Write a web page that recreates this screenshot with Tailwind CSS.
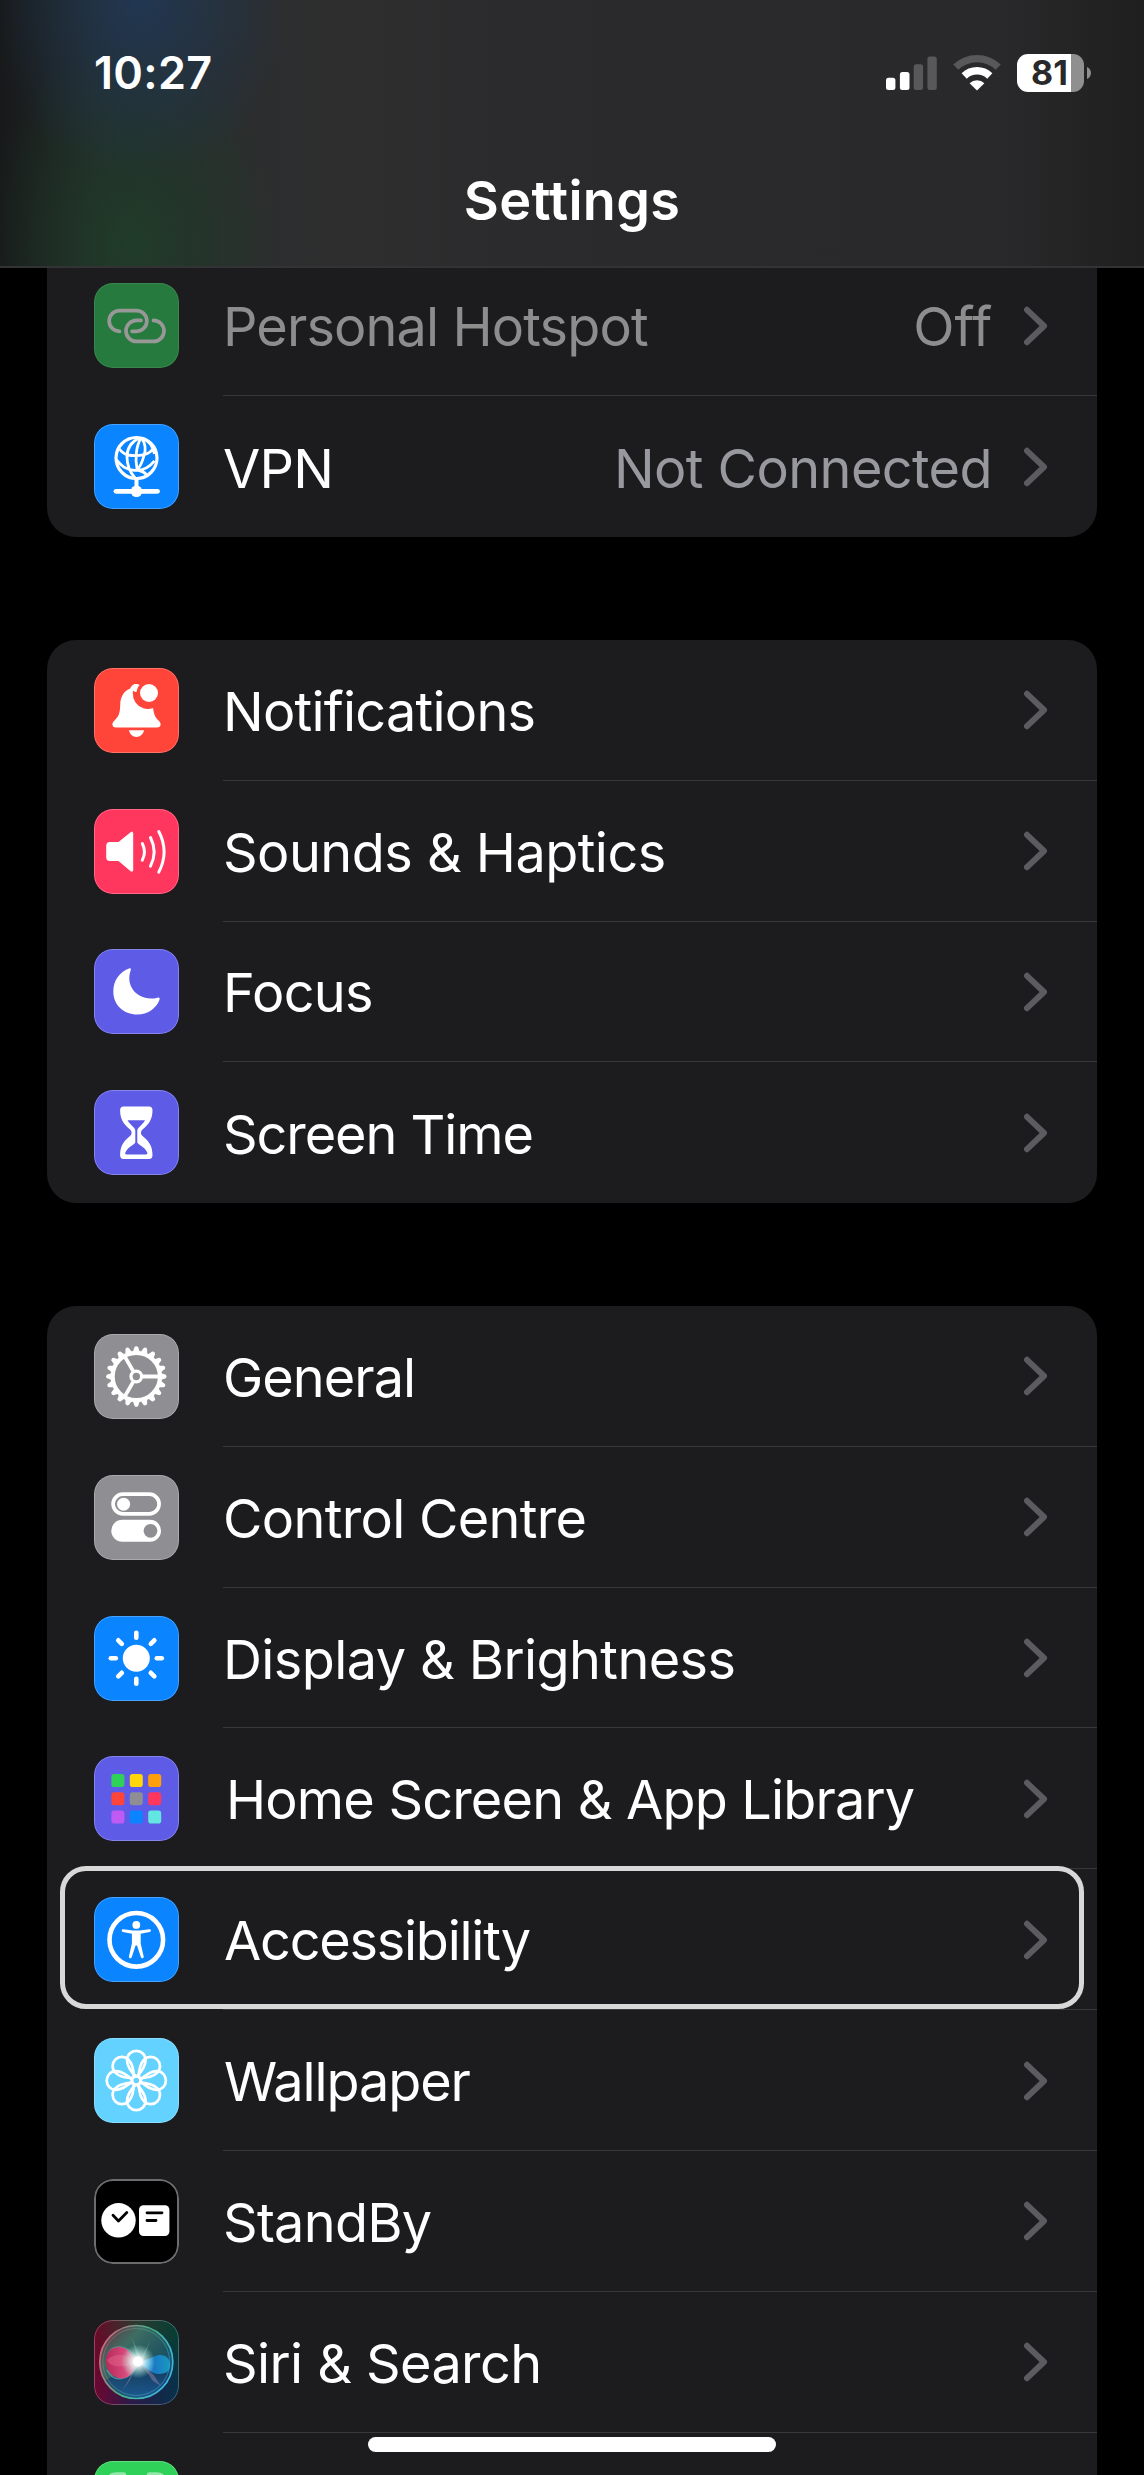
<!DOCTYPE html>
<html lang="en">
<head>
<meta charset="utf-8">
<title>Settings</title>
<script src="https://cdn.jsdelivr.net/npm/@tailwindcss/browser@4"></script>
</head>
<body class="bg-black">
<div id="screen" class="relative h-[2475px] w-[1144px] overflow-hidden bg-black font-['Inter',sans-serif] text-[54px] leading-[66px] text-white">

  <main id="groups" class="flex flex-col gap-[102.75px] px-[47px] pt-[255.4px]"></main>

  <header class="absolute inset-x-0 top-0 flex h-[268px] flex-col border-b-2 border-[#333335] bg-[radial-gradient(ellipse_150px_180px_at_140px_0px,#203a5ccc,transparent),radial-gradient(ellipse_150px_210px_at_130px_245px,#1f402acc,transparent),linear-gradient(90deg,#17191a_0px,#222826_90px,#2a2d2d_230px,#2e2e2f_330px,#2a2a2c_600px,#29292b_1000px,#1f1f1f_1144px)]">
    <div class="flex h-[144px] items-center justify-between pl-[94px] pr-[53px] pt-px">
      <time class="text-[45px] font-semibold leading-[54px] tracking-[0.3px]">10:27</time>
      <div class="flex items-center gap-4">
        <svg class="h-[38px] w-[51px]" viewBox="0 0 51 38" fill="#fff"><rect x="0" y="23.7" width="9.4" height="12.4" rx="2.5"/><rect x="13.9" y="18" width="9.6" height="18.1" rx="2.5"/><g fill="#58585a"><rect x="27.7" y="10.3" width="9.4" height="25.8" rx="2.5"/><rect x="41.4" y="2.5" width="9.4" height="33.6" rx="2.5"/></g></svg>
        <svg class="h-[38px] w-[48px]" viewBox="0 0 48 38" fill="none" stroke-width="7.4"><path d="M2.8 13.2a30.4 30.4 0 0 1 42.4 0" stroke="#58585a"/><path d="M11.2 22a18.3 18.3 0 0 1 25.6 0" stroke="#fff"/><path d="M24 36.5 16.6 29.3a10.6 10.6 0 0 1 14.8 0z" fill="#fff"/></svg>
        <div class="flex items-center gap-[3px]">
          <div class="flex h-[38px] w-[67px] items-center justify-center rounded-[11px] bg-[linear-gradient(90deg,#fff_54.5px,#8f8f90_54.5px)]"><span class="-ml-0.5 text-[34px] font-bold leading-[38px] text-[#29292b]">81</span></div>
          <svg class="h-3 w-1" viewBox="0 0 4 12"><path d="M0 0C5.3 2.4 5.3 9.6 0 12z" fill="#8f8f90"/></svg>
        </div>
      </div>
    </div>
    <h1 class="pt-6 text-center font-semibold tracking-[0.27px]">Settings</h1>
  </header>

  <div class="absolute left-[368px] top-[2437px] h-[15px] w-[408px] rounded-full bg-white"></div>
</div>

<script>
const spin = (n, draw) => Array.from({ length: n }, (_, i) => `<g transform="rotate(${i * 360 / n})">${draw}</g>`).join('');

const icons = {
  hotspot: `<g fill="none" stroke="#989898" stroke-width="3.7" stroke-linecap="round"><path d="M25.5 48.3a10.35 10.35 0 0 1 0-20.7h17a10.35 10.35 0 0 1 0 20.7H38"/><path d="M47 37.4h-4.5a10.5 10.5 0 0 0 0 21h17a10.5 10.5 0 0 0 0-21"/></g>`,
  vpn: `<g fill="none" stroke="#fff" stroke-width="2.8"><circle cx="42.5" cy="34" r="20.5" stroke-width="3.2"/><path d="M45 14C37 18 33 25 33 33s2 14 8 21M47 14C42 22 41 35 43 45M47.5 14C51 19 52 26 50 31.5 48 39 46 43 43 46M48 14c7 2.5 11 9 12.500 16M25 24.500c3 4 6 6 9 6.500 6 1 11 .8 16-.3q6-1.500 9-6M22.500 36c5 6 9 9.500 18 10.300 8 .7 14-2 20-9.500M43 46q7 1 10 5.500"/></g><path d="M42.5 54v14" stroke="#fff" stroke-width="4"/><path d="M22 67.3h41.5" stroke="#fff" stroke-width="4.8" stroke-linecap="round"/><circle cx="42.5" cy="67.3" r="5.8" fill="#fff"/>`,
  bell: `<path fill="#fff" d="M42.5 16c-3.2 0-5.5 1.8-6.3 4.6C29 23.5 26.3 30 26.2 37c-.2 9.5-2.2 11.8-5.5 15.3-1.4 1.5-2.3 2.7-2.3 4.2 0 1.9 1.4 3 3.6 3h41c2.2 0 3.6-1.1 3.6-3 0-1.5-.9-2.7-2.3-4.2-2.7-2.9-4.6-6-5.2-12.4A15 15 0 0 1 42.5 16M35 62.3h15c-.8 4-3.6 6.600-7.5 6.600s-6.700-2.600-7.500-6.600"/><circle cx="42.5" cy="20" r="4" fill="#fff"/><circle cx="55" cy="25" r="12.4" fill="#ff453a"/><circle cx="55" cy="25" r="9" fill="#fff"/>`,
  sound: `<path fill="#fff" d="M16 33h8.5L36.6 23.3c1.2-1 2.6-.2 2.6 1.2v36.5c0 1.4-1.4 2.2-2.6 1.2L24.5 52H16c-2.6 0-3.8-1.3-3.8-3.8V36.8C12.2 34.3 13.4 33 16 33"/><g fill="none" stroke="#fff" stroke-width="3" stroke-linecap="round"><path d="M48.3 34.5q4.3 8.3 0 16.6M56.5 28.5q7.3 14.3 0 28.6M64.8 22.5q10.6 20.3 0 40.6"/></g>`,
  moon: `<path fill="#fff" d="M35 19.4c1.4-.5 2.3.2 1.8 1.7C30.5 38 45 53.5 63.5 48.7c1.7-.4 2.6.5 2 2C62.3 59.5 53.5 65.5 43.5 65.5 29.5 65.5 19.3 56 19.3 42.5 19.3 31.5 25.5 22.8 35 19.4"/>`,
  hourglass: `<path fill="#fff" d="M29.5 16.500h25.600c2.200 0 3.400 1.500 3.400 3.600 0 9.200-3.600 14.100-9.100 18.600-1.800 1.500-2.400 2.500-2.400 4s.6 2.600 2.400 4.100c5.500 4.500 9.100 9.300 9.100 18.500 0 2.100-1.200 3.700-3.400 3.700H29.500c-2.200 0-3.400-1.600-3.400-3.700 0-9.200 3.600-14 9.100-18.500 1.800-1.500 2.400-2.600 2.400-4.100s-.6-2.500-2.400-4C29.700 34.200 26.100 29.300 26.100 20.100c0-2.100 1.200-3.600 3.400-3.600"/><path fill="#5e5ce6" d="M33.600 30.300h17.400c-1.500 2.800-3.400 4.500-5.400 6.400-1.500 1.400-2.300 2.600-2.300 4.200V52c0 1 .8 1.700 2 2.500 3.800 2.500 6.900 5 8 8.300.4 1.200-.1 1.700-1.300 1.700H32.600c-1.200 0-1.700-.5-1.300-1.700 1.100-3.300 4.200-5.800 8-8.300 1.200-.8 2-1.500 2-2.500V40.900c0-1.600-.8-2.800-2.300-4.200-2-1.900-3.900-3.600-5.400-6.400"/>`,
  gear: `<g transform="translate(42.3 42.5)" fill="none" stroke="#fff"><circle r="23.7" stroke-width="4.3"/><g fill="#fff" stroke="none">${spin(20, '<path d="M25 -3.3 L29.5 -1.8 Q31.2 0 29.5 1.8 L25 3.3z"/>')}</g><circle r="5.3" stroke-width="3.2"/><g stroke-width="3.8">${spin(3, '<path d="M6.5 0H23"/>')}</g></g>`,
  toggles: `<rect x="19.1" y="19.2" width="46" height="19.6" rx="9.8" fill="none" stroke="#fff" stroke-width="3.7"/><circle cx="29.6" cy="29.2" r="6.5" fill="#fff"/><rect x="17.3" y="44.8" width="49.7" height="22" rx="11" fill="#fff"/><circle cx="56.5" cy="55.8" r="6.9" fill="#8e8e93"/>`,
  sun: `<g transform="translate(42.3 42.3)"><circle r="13.5" fill="#fff"/><g stroke="#fff" stroke-width="4.6" stroke-linecap="round">${spin(8, '<path d="M20.5 0h5"/>')}</g></g>`,
  grid: ['#30d158', '#ffd60a', '#ff9f0a', '#ff453a', '#8e8e93', '#ff375f', '#bf5af2', '#0a84ff', '#63e6e2'].map((c, i) => `<rect x="${17.4 + (i % 3) * 18.4}" y="${18 + Math.floor(i / 3) * 18.3}" width="13" height="13" rx="2.8" fill="${c}"/>`).join(''),
  access: `<circle cx="42.3" cy="42.8" r="26.8" fill="none" stroke="#fff" stroke-width="4.6"/><g fill="#fff"><circle cx="42.3" cy="27.9" r="3.9"/><path d="M29.2 32.2 39 33.6h6.6l9.8-1.4c1.7-.2 2.1 2.3.3 2.700l-9 1.900v9.600l3 13c.4 1.900-2.100 2.600-2.800.8L43 48.500h-1.400l-3.900 11.700c-.7 1.800-3.200 1.100-2.800-.8l3-13v-9.600l-9-1.900c-1.800-.4-1.400-2.900.3-2.700"/></g>`,
  flower: `<g transform="translate(42.3 42.5)" fill="none" stroke="#fff" stroke-width="2.7">${spin(8, '<path d="M0 -3.500C-4 -7.500 -9.300 -14 -9.300 -20.500a9.200 9 0 0 1 18.600 0C9.300 -14 4 -7.500 0 -3.500z"/>')}<circle r="4" fill="#64d2ff" stroke-width="2.4"/></g>`,
  standby: `<circle cx="24.5" cy="41.3" r="17.2" fill="#fff"/><rect x="45" y="26.2" width="30.4" height="30.8" rx="4.5" fill="#fff"/><g fill="none" stroke="#000" stroke-width="2.8" stroke-linecap="round" stroke-linejoin="round"><path d="m19 36.3 5.5 5.6 8.3-8.4M53 33.8h15M53 41.5h9"/></g>`,
  siri: `<defs>
    <linearGradient id="sb" x1="0" x2="1"><stop offset="0" stop-color="#6e0730"/><stop offset=".45" stop-color="#2a1a48"/><stop offset="1" stop-color="#06324a"/></linearGradient>
    <linearGradient id="st" x1="0" x2="1"><stop offset="0" stop-color="#6a0a26"/><stop offset=".5" stop-color="#2b3a30"/><stop offset="1" stop-color="#053f33"/></linearGradient>
    <linearGradient id="sf" x1="0" x2="0" y1="0" y2="1"><stop offset=".1" stop-color="#fff"/><stop offset=".8" stop-color="#fff" stop-opacity="0"/></linearGradient>
    <mask id="sm"><rect width="85" height="85" fill="url(#sf)"/></mask>
    <linearGradient id="so" x1="0" x2="1" y1="0" y2="1"><stop offset="0" stop-color="#6a2a3c"/><stop offset=".3" stop-color="#3e6d62"/><stop offset=".6" stop-color="#1f5560"/><stop offset="1" stop-color="#0b4a86"/></linearGradient>
    <linearGradient id="sr" x1="0" x2="1" y1=".3" y2=".7"><stop offset="0" stop-color="#d8607a"/><stop offset=".5" stop-color="#45b48c"/><stop offset="1" stop-color="#3fb4ea"/></linearGradient>
    <radialGradient id="sw"><stop offset="0" stop-color="#fff"/><stop offset=".3" stop-color="#f4ffff" stop-opacity=".85"/><stop offset="1" stop-color="#a5ffe8" stop-opacity="0"/></radialGradient>
    <linearGradient id="sp" x1="0" x2="1"><stop offset="0" stop-color="#b82a5c"/><stop offset=".6" stop-color="#d8487a"/><stop offset="1" stop-color="#ee8fa6"/></linearGradient>
    <linearGradient id="sl" x1="0" x2="1"><stop offset="0" stop-color="#6bc4ff"/><stop offset=".5" stop-color="#1a7fd0"/><stop offset="1" stop-color="#18a0c8"/></linearGradient>
    <linearGradient id="sd" x1="0" x2="0" y1="0" y2="1"><stop offset="0" stop-color="#12304c"/><stop offset="1" stop-color="#1c5a96"/></linearGradient>
  </defs>
  <rect width="85" height="85" fill="url(#sb)"/><rect width="85" height="85" fill="url(#st)" mask="url(#sm)"/>
  <circle cx="42.3" cy="42" r="36.3" fill="url(#so)"/>
  <path d="M44 42 12 60Q24 77.500 43 77.500 68 76 76 54z" fill="url(#sd)" opacity=".85"/>
  <path d="M13 50c6 12 20 13 31-5M14 34c5-10 20-10 30 6" fill="none" stroke="#6fb7bd" stroke-width="1.6" opacity=".6"/>
  <path d="M44 42C36 30 30 26.500 24 27 14 28 11 36 12 44s8 14.500 16 14.500S40 50 44 42" fill="url(#sp)"/>
  <path d="M44 42C34 33 20 33 13 40c2 8 20 8 31 2" fill="#f07a9b" opacity=".35"/>
  <path d="M44 42c8 5 13 12 21 12s11-4 11-9.500S72 35 66 35s-13 6-22 7" fill="url(#sl)" opacity=".9"/>
  <path d="m47 44 12 10 8 12-8-5zM42 46 30 68l-4 6 10-14z" fill="#b090b8" opacity=".4"/>
  <path d="M44 41 38 18l9 20 9-17-7 20z" fill="#c8fff0" opacity=".2"/>
  <circle cx="44" cy="41.5" r="17" fill="url(#sw)"/><circle cx="44" cy="41.5" r="5" fill="#fff"/>
  <circle cx="42.3" cy="42" r="36.5" fill="none" stroke="url(#sr)" stroke-width="1.700"/><circle cx="42.3" cy="42" r="33.5" fill="none" stroke="url(#sr)" stroke-width="1" opacity=".5"/>`,
  faceid: `<g fill="none" stroke="#93e8a9" stroke-width="5.5" stroke-linecap="round"><path d="M15.500 28V21q0-7 7-7h7M55.500 14h7q7 0 7 7v7"/></g>`
};

// [label, icon, tile classes, label classes, value, value classes, state]
const groups = [
  [
    ['Personal Hotspot', 'hotspot', 'bg-[#267a3d]', 'tracking-[-0.87px] text-[#8d8d8e]', 'Off', 'tracking-[-0.13px] text-[#8d8d8e] mr-[31px]'],
    ['VPN', 'vpn', 'bg-[#0a84ff]', 'tracking-[-0.77px]', 'Not Connected', 'tracking-[-0.58px] text-[#98989f] mr-[31px]']
  ],
  [
    ['Notifications', 'bell', 'bg-[#ff453a]', 'tracking-[-0.75px]'],
    ['Sounds &amp; Haptics', 'sound', 'bg-[#ff375f]', 'tracking-[-0.53px]'],
    ['Focus', 'moon', 'bg-[#5e5ce6]', 'tracking-[-0.7px]'],
    ['Screen Time', 'hourglass', 'bg-[#5e5ce6]', 'tracking-[-1.08px]']
  ],
  [
    ['General', 'gear', 'bg-[#8e8e93]', 'tracking-[-0.95px]'],
    ['Control Centre', 'toggles', 'bg-[#8e8e93]', 'tracking-[-0.68px]'],
    ['Display &amp; Brightness', 'sun', 'bg-[#0a84ff]', 'tracking-[-0.6px]'],
    ['Home Screen &amp; App Library', 'grid', 'bg-[#5e5ce6]', 'tracking-[-0.82px] pl-[3px]'],
    ['Accessibility', 'access', 'bg-[#0a84ff]', 'tracking-[-1.24px] pl-px', '', '', 'focused'],
    ['Wallpaper', 'flower', 'bg-[#64d2ff]', 'tracking-[-1.1px] pl-px'],
    ['StandBy', 'standby', 'bg-black', 'tracking-[-0.73px]'],
    ['Siri &amp; Search', 'siri', 'bg-[#2a1a48]', 'tracking-[-0.6px]'],
    ['', 'faceid', 'bg-[#30d158]', '']
  ]
];

const row = ([label, icon, tile, labelCls, value = '', valueCls = '', state], i, all) => `
  <li class="relative flex h-[140.85px] items-center pl-[47px]">
    <div class="relative size-[85px] shrink-0 overflow-hidden rounded-[19px] ${tile}">
      <svg class="size-full" viewBox="0 0 85 85">${icons[icon]}</svg>
      <div class="absolute inset-0 rounded-[19px] ${icon === 'standby' ? 'border-2 border-[#6c6c6e]' : icon === 'hotspot' ? 'border border-white/10' : 'border border-white/25'}"></div>
    </div>
    <div class="ml-[44px] flex h-full flex-1 items-center justify-between pr-[49px] ${i < all.length - 1 ? 'border-b border-[#38383a]' : ''}">
      <span class="whitespace-nowrap pt-1 ${labelCls}">${label}</span>
      <span class="flex items-center"><span class="whitespace-nowrap pt-1 ${valueCls}">${value}</span>
        <svg class="mt-px h-10 w-[25px]" viewBox="0 0 25 40"><path d="M4 3.8 21 20 4 36.2" fill="none" stroke="#5b5b60" stroke-width="6" stroke-linecap="round" stroke-linejoin="round"/></svg>
      </span>
    </div>
    ${state === 'focused' ? '<div class="absolute -top-[3.4px] left-[13px] z-10 h-[143px] w-[1024px] rounded-[26px] border-5 border-[#d8d8d8]"></div>' : ''}
  </li>`;

document.getElementById('groups').innerHTML = groups
  .map((rows, i) => `<ul class="${i === 0 ? 'rounded-b-[29px]' : 'rounded-[29px]'} bg-[#1c1c1e]">${rows.map(row).join('')}</ul>`).join('');
</script>
</body>
</html>
